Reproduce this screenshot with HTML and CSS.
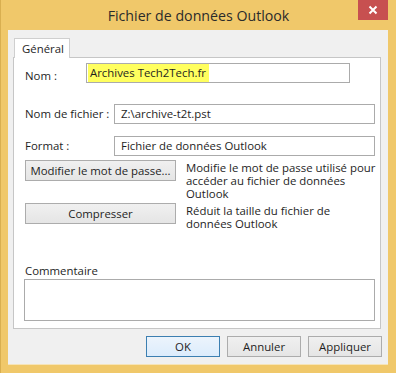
FILE: index.html
```html
<html>
	<head>
		<link rel="stylesheet" href="styles.css">
	</head>
	<body>
		<div class="window">
			<div class="titlebar">
				<div class="title">Fichier de données Outlook</div>
				<div class="close">
					<svg width="10" height="10" viewBox="0 0 10 10">
						<path d="M1.5 1.5 L8.5 8.5 M8.5 1.5 L1.5 8.5" stroke="#fff" stroke-width="2"/>
					</svg>
				</div>
			</div>
			<div class="client">
				<div class="tabs">
					<div class="tab">Général</div>
				</div>
				<div class="panel">
					<div class="row row-nom">
						<div class="label label-nom">Nom :</div>
						<div class="field field-nom"><span class="highlight">Archives Tech2Tech.fr</span></div>
					</div>
					<div class="row row-file">
						<div class="label">Nom de fichier :</div>
						<div class="field field-wide">Z:\archive-t2t.pst</div>
					</div>
					<div class="row row-format">
						<div class="label">Format :</div>
						<div class="field field-wide">Fichier de données Outlook</div>
					</div>
					<div class="row row-action">
						<div class="button button-action">Modifier le mot de passe...</div>
						<div class="desc">Modifie le mot de passe utilisé pour accéder au fichier de données Outlook</div>
					</div>
					<div class="row row-action row-compress">
						<div class="button button-action">Compresser</div>
						<div class="desc">Réduit la taille du fichier de données Outlook</div>
					</div>
					<div class="comment">
						<div class="comment-label">Commentaire</div>
						<div class="comment-box"></div>
					</div>
				</div>
				<div class="actions">
					<div class="button button-default">OK</div>
					<div class="button">Annuler</div>
					<div class="button">Appliquer</div>
				</div>
			</div>
		</div>
	</body>
</html>
```

FILE: styles.css
```css
body{
	margin: 0;
	font-family: "Open Sans", "Noto Sans", sans-serif;
	font-size: 11.4px;
	color: #1e1e1e;
}
.window{
	width: 396px;
	height: 373px;
	box-sizing: border-box;
	background: #f0c86a;
	border-left: 1px solid #d9af50;
	display: flex;
	flex-direction: column;
}
.titlebar{
	height: 30px;
	display: flex;
	align-items: flex-start;
	justify-content: center;
	position: relative;
}
.title{
	font-size: 14.2px;
	color: #2b2b2b;
	margin-top: 6px;
}
.close{
	position: absolute;
	top: 0;
	right: 8px;
	width: 30px;
	height: 20px;
	background: #c75050;
	display: flex;
	align-items: center;
	justify-content: center;
}
.client{
	flex: 1;
	margin: 0 8px 8px 7px;
	background: #f0f0f0;
	border-bottom: 1px solid #f6e4b8;
	display: flex;
	flex-direction: column;
	padding-top: 8px;
}
.tabs{
	display: flex;
	padding-left: 6px;
	height: 19px;
	position: relative;
	z-index: 1;
}
.tab{
	background: #fff;
	border: 1px solid #cfcfcf;
	border-bottom: none;
	width: 56px;
	height: 20px;
	box-sizing: border-box;
	padding: 2px 0 0 7px;
}
.panel{
	margin-left: 5px;
	width: 368px;
	height: 272px;
	box-sizing: border-box;
	background: #fff;
	border: 1px solid #c6c6c6;
	padding: 5px 0 7px 11px;
	display: flex;
	flex-direction: column;
}
.row{
	display: flex;
	align-items: flex-start;
}
.label{
	width: 89px;
	line-height: 20px;
}
.label-nom{
	width: 61px;
	padding-top: 3px;
}
.field{
	height: 20px;
	box-sizing: border-box;
	border: 1px solid #ababab;
	padding: 0 6px;
	line-height: 18px;
	white-space: nowrap;
	overflow: hidden;
}
.field-nom{
	width: 264px;
	padding-left: 1px;
}
.highlight{
	display: inline-block;
	background: #ffff5e;
	padding: 0 3px 0 2px;
}
.field-wide{
	width: 261px;
}
.row-file{
	margin-top: 18px;
}
.row-format{
	margin-top: 12px;
}
.row-action{
	margin-top: 4px;
}
.row-compress{
	margin-top: 3px;
}
.button{
	width: 74px;
	height: 21px;
	box-sizing: border-box;
	border: 1px solid #acacac;
	background: linear-gradient(#f0f0f0, #e5e5e5);
	text-align: center;
	line-height: 19px;
	white-space: nowrap;
}
.button-action{
	width: 151px;
}
.desc{
	margin-left: 10px;
	width: 190px;
	line-height: 13px;
	margin-top: 1px;
}
.row-action .desc{
	height: 39px;
}
.comment{
	margin-top: auto;
}
.comment-label{
	line-height: 15px;
}
.comment-box{
	width: 351px;
	height: 42px;
	box-sizing: border-box;
	border: 1px solid #ababab;
	margin-left: -1px;
	margin-top: 1px;
}
.actions{
	display: flex;
	justify-content: flex-end;
	gap: 7px;
	padding: 7px 6px 0 0;
}
.button-default{
	border-color: #3c7fb1;
	background: linear-gradient(#ecf4fc, #dcecfc);
}
```
